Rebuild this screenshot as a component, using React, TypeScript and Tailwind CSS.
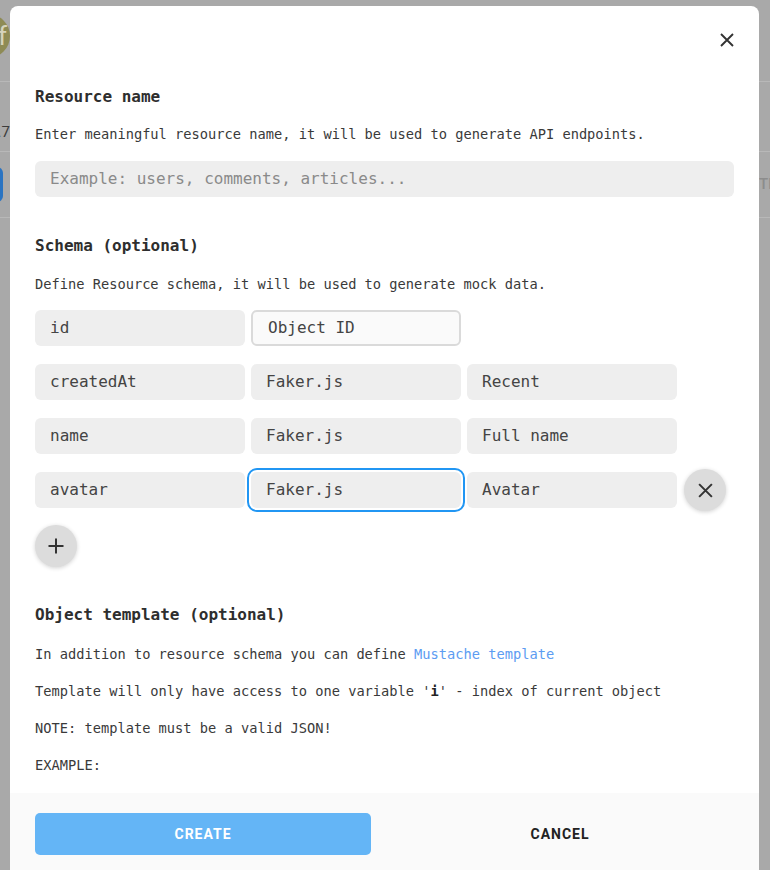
import React from "react";

const mono = "font-['DejaVu_Sans_Mono',_'Liberation_Mono',_monospace]";

function Field({
  value,
  variant = "plain",
}: {
  value: string;
  variant?: "plain" | "outlined" | "focused";
}) {
  const base =
    "flex h-[36px] w-[210px] items-center rounded-md pl-[15px] text-[16px] text-[#444]";
  if (variant === "outlined")
    return (
      <div className={`${base} border-2 border-[#dadada] bg-[#fafafa] pl-[11px]`}>
        {value}
      </div>
    );
  if (variant === "focused")
    return (
      <div
        className={`${base} bg-[#eeeeee] outline-2 outline-offset-2 outline-[#2196f3] outline-solid`}
      >
        {value}
      </div>
    );
  return <div className={`${base} bg-[#eeeeee]`}>{value}</div>;
}

function CloseIcon({ size = 16 }: { size?: number }) {
  return (
    <svg width={size} height={size} viewBox="0 0 16 16" fill="none">
      <path d="M2 2L14 14M14 2L2 14" stroke="#333" strokeWidth="1.9" />
    </svg>
  );
}

function RoundButton({ children }: { children: React.ReactNode }) {
  return (
    <button
      type="button"
      className="flex h-[42px] w-[42px] items-center justify-center rounded-full bg-[#dcdcdc] shadow-[0_1px_4px_rgba(0,0,0,0.18)]"
    >
      {children}
    </button>
  );
}

function Strip({ side }: { side: "left" | "right" }) {
  return (
    <div className="flex flex-col overflow-hidden">
      <div className="h-[14px]" />
      <div className="flex h-[44px] items-center justify-end">
        {side === "left" && (
          <div className="-ml-[34px] flex h-[44px] w-[44px] shrink-0 items-center justify-end rounded-full bg-[#8e8b55] pr-[3px] font-['Roboto'] text-[26px] text-[#d6d4bd]">
            f
          </div>
        )}
      </div>
      <div className="mt-[23px] h-px bg-[#b8b8b8]" />
      <div className="flex h-[69px] items-end justify-end pb-[9px]">
        {side === "left" && (
          <span className="whitespace-nowrap font-['Roboto'] text-[15px] leading-5 text-[#3c3c3c]">4.7</span>
        )}
      </div>
      <div className="h-px bg-[#b8b8b8]" />
      <div className="flex h-[65px] items-center">
        {side === "left" ? (
          <div className="-ml-[20px] h-[35px] w-[23px] shrink-0 rounded-md bg-[#2a74c2]" />
        ) : (
          <span className="whitespace-nowrap font-['Roboto'] text-[15px] font-medium text-[#8c8c8c]">TE</span>
        )}
      </div>
      <div className="h-px bg-[#b8b8b8]" />
    </div>
  );
}

const schema: { cells: { value: string; variant?: "plain" | "outlined" | "focused" }[]; removable?: boolean }[] = [
  { cells: [{ value: "id" }, { value: "Object ID", variant: "outlined" }] },
  { cells: [{ value: "createdAt" }, { value: "Faker.js" }, { value: "Recent" }] },
  { cells: [{ value: "name" }, { value: "Faker.js" }, { value: "Full name" }] },
  {
    cells: [{ value: "avatar" }, { value: "Faker.js", variant: "focused" }, { value: "Avatar" }],
    removable: true,
  },
];

export default function App() {
  return (
    <div className="flex h-[870px] w-[770px] overflow-hidden bg-[#a9a9a9]">
      <div className="w-[10px] shrink-0">
        <Strip side="left" />
      </div>

      <div className={`mt-[6px] flex h-[880px] w-[749px] shrink-0 flex-col rounded-t-lg bg-white ${mono}`}>
        <div className="h-[787px] overflow-hidden px-[25px]">
          <div className="flex justify-end pt-[26px] pr-0">
            <button type="button" className="-mr-px">
              <CloseIcon />
            </button>
          </div>

          <h2 className="mt-[39px] text-[16px] leading-5 font-bold text-[#2e2e2e]">Resource name</h2>
          <p className="mt-[17px] text-[13.7px] leading-5 text-[#3a3a3a]">
            Enter meaningful resource name, it will be used to generate API endpoints.
          </p>
          <div className="mt-[17px] flex h-[36px] items-center rounded-md bg-[#eeeeee] pl-[15px] text-[16px] text-[#8a8a8a]">
            Example: users, comments, articles...
          </div>

          <h2 className="mt-[39px] text-[16px] leading-5 font-bold text-[#2e2e2e]">Schema (optional)</h2>
          <p className="mt-[18px] text-[13.7px] leading-5 text-[#3a3a3a]">
            Define Resource schema, it will be used to generate mock data.
          </p>

          <div className="mt-[16px] flex flex-col gap-[18px]">
            {schema.map((row, i) => (
              <div key={i} className="flex h-[36px] items-center gap-[6px]">
                {row.cells.map((c, j) => (
                  <Field key={j} value={c.value} variant={c.variant} />
                ))}
                {row.removable && (
                  <div className="ml-px">
                    <RoundButton>
                      <CloseIcon size={17} />
                    </RoundButton>
                  </div>
                )}
              </div>
            ))}
          </div>

          <div className="mt-[17px]">
            <RoundButton>
              <svg width="18" height="18" viewBox="0 0 18 18" fill="none">
                <path d="M9 1.5V16.5M1.5 9H16.5" stroke="#333" strokeWidth="2" />
              </svg>
            </RoundButton>
          </div>

          <h2 className="mt-[38px] text-[16px] leading-5 font-bold text-[#2e2e2e]">
            Object template (optional)
          </h2>
          <div className="mt-[19px] flex flex-col gap-[17px] text-[13.7px] leading-5 text-[#3a3a3a]">
            <p>
              In addition to resource schema you can define{" "}
              <a className="text-[#5c9cf2]">Mustache template</a>
            </p>
            <p>
              Template will only have access to one variable '<b className="text-[#222]">i</b>' - index of
              current object
            </p>
            <p>NOTE: template must be a valid JSON!</p>
            <p>EXAMPLE:</p>
          </div>
        </div>

        <div className="flex h-[93px] items-start bg-[#fafafa] pt-[20px] pr-[10px] pl-[25px] font-['Roboto',_sans-serif]">
          <button
            type="button"
            className="flex h-[42px] w-[336px] items-center justify-center rounded-[5px] bg-[#64b5f6] text-[14px] font-bold tracking-[0.07em] text-white"
          >
            CREATE
          </button>
          <button
            type="button"
            className="flex h-[42px] flex-1 items-center justify-center text-[14px] font-bold tracking-[0.07em] text-[#222]"
          >
            CANCEL
          </button>
        </div>
      </div>

      <div className="flex-1">
        <Strip side="right" />
      </div>
    </div>
  );
}
